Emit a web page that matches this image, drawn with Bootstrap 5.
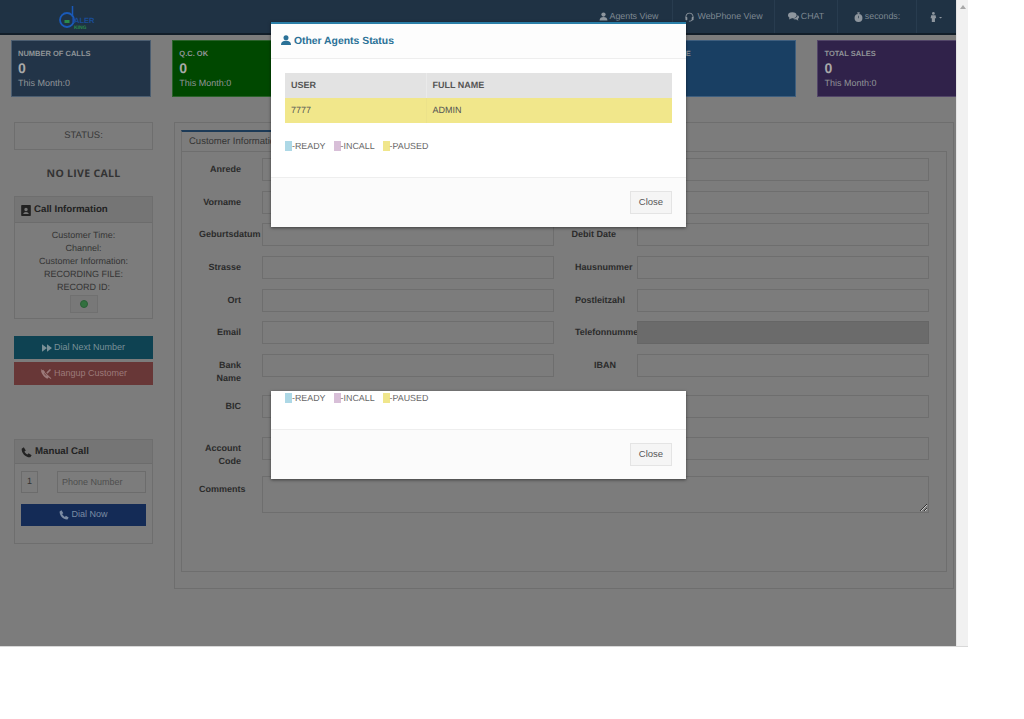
<!DOCTYPE html>
<html lang="en">
<head>
<meta charset="utf-8">
<title>Agent Console</title>
<link rel="stylesheet" href="https://cdn.jsdelivr.net/npm/bootstrap@5.3.0/dist/css/bootstrap.min.css">
<style>
html,body{margin:0;background:#fff;font-family:"Liberation Sans",Arial,sans-serif;font-size:9px;color:#3a3a3a;overflow:hidden;text-rendering:geometricPrecision}
.shell{width:968px;height:647px;border-bottom:1px solid #d8d8d8;position:relative;overflow:hidden}
.stage{width:956px;height:646px;background:#7c7c7c;overflow:hidden;flex:none}
.rail{width:12px;height:646px;background:#f1f1f1;border-left:1px solid #e4e4e4;flex:none;position:relative}
.rail-arrow{display:block;width:0;height:0;border:3px solid transparent;border-bottom:4px solid #a8a8a8;margin:2px auto 0}
.topbar{height:35px;background:#1f3244;border-bottom:2px solid #121e29;padding:0}
.brand-logo{margin-left:57px;width:42px;height:33px;display:block}
.top-item{height:33px;display:flex;align-items:center;justify-content:center;gap:2px;color:#7d8791;border-left:1px solid #283c4f;font-size:8.85px}
.top-item svg{fill:#8e969e}
.w-agents{width:87px;border-left:0}
.w-phone{width:102px}
.w-chat{width:63px}
.w-sec{width:79px}
.w-user{width:40px}
.stats{padding:5px 0 0 11px;gap:21.3px}
.stat{width:140px;height:57px;flex:none;border:1px solid #4f6072;padding:8px 6px;color:#909498;line-height:1}
.stat-label{font-size:7.5px;font-weight:700;display:block;margin-top:1px}
.stat-num{font-size:14px;font-weight:700;display:block;margin:3px 0 4px;color:#a8a8a8}
.stat-foot{font-size:9px;display:block}
.c-navy{background:#223448;border-color:#4b5d70}
.c-green{background:#004800;border-color:#2a622a}
.c-teal{background:#15545f;border-color:#30696f}
.c-rose{background:#633232;border-color:#784c4c}
.c-blue{background:#193f63;border-color:#3e5e7e}
.c-purple{background:#30224a;border-color:#524568}
.workspace{padding-left:14px;margin-top:25px;gap:21px}
.side{width:139px;flex:none}
.status-box{height:28px;border:1px solid #6e6e6e;display:flex;align-items:center;justify-content:center;color:#383838;font-size:9.5px}
.no-call{font-family:"Open Sans","Liberation Sans",sans-serif;font-weight:700;font-size:10.5px;letter-spacing:.3px;text-align:center;color:#333;margin:17px 0 15px;line-height:14px}
.pane{background:transparent;border:1px solid #6e6e6e;border-radius:0;color:#383838}
.pane-head{height:26px;background:#757575;border-bottom:1px solid #6c6c6c;padding:2px 6px 0;display:flex;align-items:center;gap:3px;font-weight:700;font-size:9.7px;color:#222}
.pane-head svg{fill:#222}
.info-lines{line-height:13px;text-align:center;padding:6px 0 0;height:95px;color:#343434}
.led-box{width:28px;height:18px;background:#787878;border:1px solid #707070;margin:1px auto 0;display:flex;align-items:center;justify-content:center}
.led{width:8px;height:8px;border-radius:50%;background:#33703f;border:1px solid #2a5f36}
.act{width:139px;height:23px;padding:0;border:0;border-radius:0;font-size:9px;display:flex;align-items:center;justify-content:center;gap:2px}
.act svg{fill:currentColor}
.act-dial,.act-dial:hover{background:#0e4252;color:#7a9097}
.act-dial{margin-top:17px}
.act-hang,.act-hang:hover{background:#683737;color:#9c7a7a}
.act-hang{margin-top:3px}
.manual{margin-top:54px;height:105px}
.manual-head{height:24px}
.num-box{width:17px;height:22px;border:1px solid #6c6c6c;display:flex;align-items:center;justify-content:center;font-size:9px;color:#333}
.phone-field{width:89px;height:22px;font-size:9px;padding:0 4px;border:1px solid #6c6c6c;border-radius:0;background:transparent;color:#4c4c4c;box-shadow:none}
.phone-field::placeholder{color:#4e4e4e;opacity:1}
.manual-row{padding:7px 6px 0 6px;justify-content:space-between}
.act-now,.act-now:hover{background:#142b56;color:#7b8ba3}
.act-now{width:125px;height:22px;margin:11px 0 0 6px}
.outer{width:780px;height:467px;border:1px solid #6e6e6e;flex:none;padding:7px 6px 0}
.tab-strip{height:21px;width:200px;border-top:2px solid #1c3a57;border-left:1px solid #6e6e6e;border-right:1px solid #6e6e6e;padding:3px 0 0 7px;font-size:9.5px;color:#343434;line-height:13px;white-space:nowrap}
.tab-body{width:766px;height:421px;border:1px solid #6e6e6e;padding:6px 0 0 6px}
.frow{display:flex;height:23px;margin-bottom:9.7px}
.fcell{display:flex;flex:none;margin-left:11px}
.flabel{width:42px;flex:none;margin-right:21px;display:flex;justify-content:flex-end;font-weight:700;font-size:9px;line-height:13px;padding-top:5px;color:#2b2b2b;text-align:right;white-space:nowrap}
.fcell-r{margin-left:21px}
.fcell-r .flabel{width:41px}
.flabel-over{justify-content:flex-start}
.flabel-wrap{white-space:normal}
.flabel-note{padding-top:7px}
.finput{width:292px;height:23px;flex:none;border:1px solid #6e6e6e;background:transparent;border-radius:0;padding:0 4px;box-shadow:none}
.finput:disabled{background:#6b6b6b;border-color:#666;opacity:1}
.row-bank{height:31px}
.row-bic{height:32px}
.row-acct{height:30px}
.fcomment{width:667px;height:37px;min-height:0;flex:none;border:1px solid #6e6e6e;background:transparent;border-radius:0;box-shadow:none}
.clip{position:relative;z-index:1}
.dlg{position:absolute;left:271px;width:415px;background:#fff;border:0;border-radius:0;box-shadow:0 1px 3px rgba(0,0,0,.5);z-index:5;color:#555}
.dlg-top{top:22px;height:205px;border-top:2px solid #2b7fa8}
.dlg-ghost{top:391px;height:88px}
.dlg-head{height:35px;background:#fdfdfd;border-bottom:1px solid #eee;border-radius:0;padding:0 10px}
.dlg-title{font-size:10.4px;font-weight:700;color:#2a7197;line-height:1;margin:0}
.dlg-title svg{fill:#2a7197;vertical-align:-1px}
.dlg-body{padding:14px 14px 0;height:118px}
.people{width:387px;margin:0;font-size:9px;border-collapse:collapse}
.people th,.people td{height:25px;padding:0 6px;vertical-align:middle;border:0;box-shadow:none;color:#555;line-height:1}
.people th{background:#e3e3e3;font-weight:700;width:141px}
.people th+th{width:auto;border-left:1px solid #eaeaea}
.people td{background:#f1e78b}
.people td+td{border-left:1px solid #ece28a}
.legend{display:flex;align-items:center;font-size:8.9px;color:#666;line-height:10px;margin-top:18px}
.swatch{width:7px;height:10px;display:inline-block;flex:none}
.legend-txt{margin-right:8px}
.s-ready{background:#add8e6}
.s-incall{background:#d8bfd8}
.s-paused{background:#f0e68c}
.dlg-foot{height:50px;background:#fbfbfb;border-top:1px solid #eee;border-radius:0;padding:0 14px;justify-content:flex-end;align-items:center}
.dlg-close{width:42px;height:23px;padding:0;font-size:9.5px;background:#f5f5f5;border:1px solid #e4e4e4;border-radius:0;color:#555}
.dlg-ghost .dlg-body{height:38px;padding:2px 14px 0}
.dlg-ghost .legend{margin-top:0}
</style>
</head>
<body>
<div class="shell d-flex">
  <div class="stage">
    <nav class="navbar topbar d-flex flex-nowrap align-items-start">
      <svg class="brand-logo" viewBox="0 0 42 33" role="img" aria-label="Dialer King">
        <circle cx="10" cy="20" r="7" fill="none" stroke="#1a5ab8" stroke-width="1.800"/>
        <path d="M15.500 17V6" stroke="#1a5ab8" stroke-width="1.500"/>
        <rect x="7.500" y="20" width="5" height="3" fill="#2a8a4c"/>
        <text x="15" y="23" font-family="Liberation Sans" font-size="7.500" font-weight="700" fill="#1a4c98">IALER</text>
        <text x="17" y="28.500" font-family="Liberation Sans" font-size="5" font-weight="700" fill="#2a8a4c">KING</text>
      </svg>
      <div class="d-flex ms-auto">
        <div class="top-item w-agents"><svg width="9" height="9" viewBox="0 0 16 16"><circle cx="8" cy="4.500" r="3.800"/><path d="M1 15c0-4 3-6 7-6s7 2 7 6z"/></svg>Agents View</div>
        <div class="top-item w-phone"><svg width="11" height="10" viewBox="0 0 16 16"><path d="M8 1C4 1 1.500 4 1.500 8v1H3V8c0-3 2-5.500 5-5.500S13 5 13 8v1h1.500V8C14.500 4 12 1 8 1z"/><rect x="1.500" y="8" width="3" height="5" rx="1"/><rect x="11.500" y="8" width="3" height="5" rx="1"/><path d="M13 12c0 2-2 3-4 3H7v-1.200h2c1.500 0 2.800-.8 2.800-1.800z"/></svg>WebPhone View</div>
        <div class="top-item w-chat"><svg width="11" height="9" viewBox="0 0 18 14"><ellipse cx="7" cy="5" rx="7" ry="5"/><path d="M3 8 1.500 12 7 9.500z"/><path d="M15.500 4.500c1.700 1 2.500 2.200 2.500 3.500 0 1.200-.8 2.300-2 3l1 3-4-2.300c-2 .2-4-.3-5.200-1.400 4 .1 8-2 7.700-5.800z"/></svg>CHAT</div>
        <div class="top-item w-sec"><svg width="9" height="10" viewBox="0 0 14 16"><circle cx="7" cy="9.500" r="6.300"/><rect x="5" y="0.500" width="4" height="2"/><rect x="6.200" y="2" width="1.600" height="2"/><path d="M6.500 6h1v4h-1z" fill="#1f3244"/></svg>seconds:</div>
        <div class="top-item w-user"><svg width="13" height="10" viewBox="0 0 20 16"><circle cx="5" cy="2.200" r="2.200"/><path d="M1.500 5h7l1 5H7.500V16h-5V10H.5z"/><path d="M14 8h5l-2.500 2.500z"/></svg></div>
      </div>
    </nav>

    <div class="stats d-flex">
      <div class="stat c-navy"><span class="stat-label">NUMBER OF CALLS</span><span class="stat-num">0</span><span class="stat-foot">This Month:0</span></div>
      <div class="stat c-green"><span class="stat-label">Q.C. OK</span><span class="stat-num">0</span><span class="stat-foot">This Month:0</span></div>
      <div class="stat c-teal"><span class="stat-num">0</span></div>
      <div class="stat c-rose"><span class="stat-num">0</span></div>
      <div class="stat c-blue"><span class="stat-label">IN TIME</span><span class="stat-num">0</span></div>
      <div class="stat c-purple"><span class="stat-label">TOTAL SALES</span><span class="stat-num">0</span><span class="stat-foot">This Month:0</span></div>
    </div>

    <div class="workspace d-flex">
      <aside class="side">
        <div class="status-box">STATUS:</div>
        <div class="no-call">NO LIVE CALL</div>
        <div class="card pane">
          <div class="pane-head"><svg width="10" height="11" viewBox="0 0 14 16"><path d="M1 0h12a1 1 0 0 1 1 1v14a1 1 0 0 1-1 1H1a1 1 0 0 1-1-1V1a1 1 0 0 1 1-1zm6 4a2.500 2.500 0 1 0 0 5 2.500 2.500 0 0 0 0-5zM3 13h8c0-2-2-3-4-3s-4 1-4 3z" fill-rule="evenodd"/></svg>Call Information</div>
          <div class="info-lines">
            Customer Time:<br>Channel:<br>Customer Information:<br>RECORDING FILE:<br>RECORD ID:
            <div class="led-box"><span class="led"></span></div>
          </div>
        </div>
        <button type="button" class="btn act act-dial"><svg width="10" height="8" viewBox="0 0 16 12"><path d="M0 0l8 6-8 6zM8 0l8 6-8 6z"/></svg>Dial Next Number</button>
        <button type="button" class="btn act act-hang"><svg width="12" height="10" viewBox="0 0 16 14"><path d="M1 3c1 4 5 9 9 10.500l2.500-2.500-3-2.500-1.500 1C6.500 8.500 5.500 7 5 5.500L6.500 4 4 1z"/><path d="M1.500.5 15.500 13l-1 1L.5 1.500z"/><path d="M13.500 0 15 1.500 10 6.500 8.500 5z"/></svg>Hangup Customer</button>
        <div class="card pane manual">
          <div class="pane-head manual-head"><svg width="11" height="11" viewBox="0 0 16 16"><path d="M1 2.500 4 .5l3 4.500-2 1.500c.7 1.800 2.500 3.600 4.500 4.500L11 9l4.500 3-2 3C7 15.500.5 9 1 2.500z"/></svg>Manual Call</div>
          <div class="manual-row d-flex">
            <div class="num-box">1</div>
            <input type="text" class="form-control phone-field" placeholder="Phone Number">
          </div>
          <button type="button" class="btn act act-now"><svg width="10" height="10" viewBox="0 0 16 16"><path d="M1 2.500 4 .5l3 4.500-2 1.500c.7 1.800 2.500 3.600 4.500 4.500L11 9l4.500 3-2 3C7 15.500.5 9 1 2.500z"/></svg>Dial Now</button>
        </div>
      </aside>

      <section class="outer">
        <div class="tab-strip">Customer Information</div>
        <div class="tab-body">
          <div class="frow"><div class="fcell"><div class="flabel">Anrede</div><input class="form-control finput"></div><div class="fcell fcell-r"><div class="flabel"></div><input class="form-control finput"></div></div>
          <div class="frow"><div class="fcell"><div class="flabel">Vorname</div><input class="form-control finput"></div><div class="fcell fcell-r"><div class="flabel"></div><input class="form-control finput"></div></div>
          <div class="frow"><div class="fcell"><div class="flabel flabel-over">Geburtsdatum</div><input class="form-control finput"></div><div class="fcell fcell-r"><div class="flabel">Debit Date</div><input class="form-control finput"></div></div>
          <div class="frow"><div class="fcell"><div class="flabel">Strasse</div><input class="form-control finput"></div><div class="fcell fcell-r"><div class="flabel flabel-over">Hausnummer</div><input class="form-control finput"></div></div>
          <div class="frow"><div class="fcell"><div class="flabel">Ort</div><input class="form-control finput"></div><div class="fcell fcell-r"><div class="flabel flabel-over">Postleitzahl</div><input class="form-control finput"></div></div>
          <div class="frow"><div class="fcell"><div class="flabel">Email</div><input class="form-control finput"></div><div class="fcell fcell-r"><div class="flabel flabel-over">Telefonnumme</div><input class="form-control finput clip" disabled></div></div>
          <div class="frow row-bank"><div class="fcell"><div class="flabel flabel-wrap">Bank<br>Name</div><input class="form-control finput"></div><div class="fcell fcell-r"><div class="flabel">IBAN</div><input class="form-control finput"></div></div>
          <div class="frow row-bic"><div class="fcell"><div class="flabel">BIC</div><input class="form-control finput"></div><div class="fcell fcell-r"><div class="flabel"></div><input class="form-control finput"></div></div>
          <div class="frow row-acct"><div class="fcell"><div class="flabel flabel-wrap">Account<br>Code</div><input class="form-control finput"></div><div class="fcell fcell-r"><div class="flabel"></div><input class="form-control finput"></div></div>
          <div class="frow"><div class="fcell"><div class="flabel flabel-over flabel-note">Comments</div><textarea class="form-control fcomment"></textarea></div></div>
        </div>
      </section>
    </div>
  </div>
  <div class="rail"><span class="rail-arrow"></span></div>

  <div class="modal-content dlg dlg-top">
    <div class="modal-header dlg-head"><h5 class="dlg-title"><svg width="10" height="10" viewBox="0 0 16 16"><circle cx="8" cy="4.500" r="4"/><path d="M0 16c0-5 3.500-7 8-7s8 2 8 7z"/></svg> Other Agents Status</h5></div>
    <div class="modal-body dlg-body">
      <table class="table people">
        <thead><tr><th>USER</th><th>FULL NAME</th></tr></thead>
        <tbody><tr><td>7777</td><td>ADMIN</td></tr></tbody>
      </table>
      <div class="legend"><span class="swatch s-ready"></span><span class="legend-txt">-READY</span><span class="swatch s-incall"></span><span class="legend-txt">-INCALL</span><span class="swatch s-paused"></span><span>-PAUSED</span></div>
    </div>
    <div class="modal-footer dlg-foot"><button type="button" class="btn dlg-close">Close</button></div>
  </div>

  <div class="modal-content dlg dlg-ghost">
    <div class="modal-body dlg-body">
      <div class="legend"><span class="swatch s-ready"></span><span class="legend-txt">-READY</span><span class="swatch s-incall"></span><span class="legend-txt">-INCALL</span><span class="swatch s-paused"></span><span>-PAUSED</span></div>
    </div>
    <div class="modal-footer dlg-foot"><button type="button" class="btn dlg-close">Close</button></div>
  </div>
</div>
<script src="https://cdn.jsdelivr.net/npm/bootstrap@5.3.0/dist/js/bootstrap.bundle.min.js"></script>
</body>
</html>
